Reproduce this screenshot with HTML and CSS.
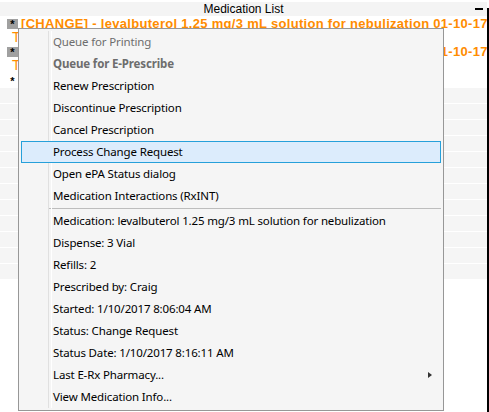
FILE: index.html
```html
<!DOCTYPE html>
<html>
<head>
<meta charset="utf-8">
<link rel="stylesheet" href="styles.css">
</head>
<body>
<div class="screen">
  <div class="main">
    <div class="header"><span class="title">Medication List</span><span class="dash"></span></div>
    <div class="entry">
      <div class="line"><span class="star grey">*</span><span class="med">[CHANGE] - levalbuterol 1.25 mg/3 mL solution for nebulization 01-10-17</span></div>
      <div class="line"><span class="sig">T</span></div>
    </div>
    <div class="entry">
      <div class="line"><span class="star grey">*</span><span class="med">[CHANGE] - levalbuterol 1.25 mg/3 mL solution for nebulization 01-10-17</span></div>
      <div class="line"><span class="sig">T</span></div>
    </div>
    <div class="entry last">
      <div class="line"><span class="star white">*</span></div>
    </div>
    <div class="stripes">
      <div class="stripe"></div><div class="stripe"></div><div class="stripe"></div><div class="stripe"></div>
      <div class="stripe"></div><div class="stripe"></div><div class="stripe"></div><div class="stripe"></div>
      <div class="stripe"></div><div class="stripe"></div><div class="stripe"></div><div class="stripe"></div>
    </div>
  </div>
  <div class="edge"></div>

  <div class="menu">
    <div class="item disabled">Queue for Printing</div>
    <div class="item disabled bold">Queue for E-Prescribe</div>
    <div class="item">Renew Prescription</div>
    <div class="item">Discontinue Prescription</div>
    <div class="item">Cancel Prescription</div>
    <div class="item hl">Process Change Request</div>
    <div class="item">Open ePA Status dialog</div>
    <div class="item">Medication Interactions (RxINT)</div>
    <div class="sep"></div>
    <div class="item">Medication: levalbuterol 1.25 mg/3 mL solution for nebulization</div>
    <div class="item">Dispense: 3 Vial</div>
    <div class="item">Refills: 2</div>
    <div class="item">Prescribed by: Craig</div>
    <div class="item">Started: 1/10/2017 8:06:04 AM</div>
    <div class="item">Status: Change Request</div>
    <div class="item">Status Date: 1/10/2017 8:16:11 AM</div>
    <div class="item">Last E-Rx Pharmacy...<span class="arrow"></span></div>
    <div class="item">View Medication Info...</div>
  </div>
</div>
</body>
</html>
```
FILE: styles.css
```css
* { box-sizing: border-box; }
body {
  margin: 0;
  background: #fff;
  font-family: "Liberation Sans", Arial, sans-serif;
}
.screen {
  position: relative;
  width: 489px;
  height: 412px;
  display: flex;
  overflow: hidden;
}
.main { flex: 1; min-width: 0; }
.edge { width: 2px; background: #000; margin-top: 8px; }

.header {
  margin-top: 2px;
  height: 14px;
  background: #f4f4f4;
  display: grid;
  grid-template-columns: 1fr auto 1fr;
  align-items: center;
  font-size: 12px;
  line-height: 14px;
  color: #000;
}
.header .title { grid-column: 2; }
.dash {
  grid-column: 3;
  justify-self: end;
  width: 8px;
  height: 2px;
  background: #000;
  margin-right: 4px;
}

.line {
  height: 14px;
  display: flex;
  align-items: center;
  white-space: nowrap;
  overflow: hidden;
}
.entry.last .line { height: 16px; }
.star {
  flex: none;
  align-self: flex-start;
  width: 11px;
  height: 10px;
  margin: 3px 3px 0 7px;
  font-size: 11px;
  font-weight: bold;
  line-height: 10px;
  text-align: center;
  color: #000;
}
.star.grey { background: #a0a0a0; }
.star.white { background: #fff; margin-top: 4px; }
.med {
  color: #ff8c00;
  font-weight: bold;
  font-size: 13px;
  letter-spacing: 0.3px;
}
.sig {
  color: #ff8c00;
  font-size: 14px;
  padding-left: 12px;
}

.stripe {
  height: 15px;
  margin-bottom: 1px;
  background: #f5f5f5;
}

.menu {
  position: absolute;
  left: 18px;
  top: 28px;
  width: 426px;
  height: 383px;
  border: 1px solid #979797;
  background: #f5f5f5;
  padding: 2px;
  font-family: "Noto Sans", sans-serif;
  font-size: 11.5px;
  letter-spacing: -0.15px;
  color: #000;
}
.menu::before {
  content: "";
  position: absolute;
  left: 29px;
  top: 2px;
  bottom: 2px;
  width: 2px;
  border-left: 1px solid #e0e0e0;
  border-right: 1px solid #fff;
}
.item {
  position: relative;
  height: 22px;
  line-height: 20px;
  padding-left: 31px;
  border: 1px solid transparent;
  white-space: nowrap;
}
.item.disabled { color: #6d6d6d; }
.item.bold { font-weight: bold; }
.item.hl {
  background: #dcecfc;
  border-color: #26a0da;
}
.sep {
  height: 1px;
  margin: 1px 0 1px 28px;
  background: #bdbdbd;
}
.arrow {
  position: absolute;
  right: 8px;
  top: 7px;
  width: 0;
  height: 0;
  border-left: 4px solid #333;
  border-top: 3.5px solid transparent;
  border-bottom: 3.5px solid transparent;
}
```
